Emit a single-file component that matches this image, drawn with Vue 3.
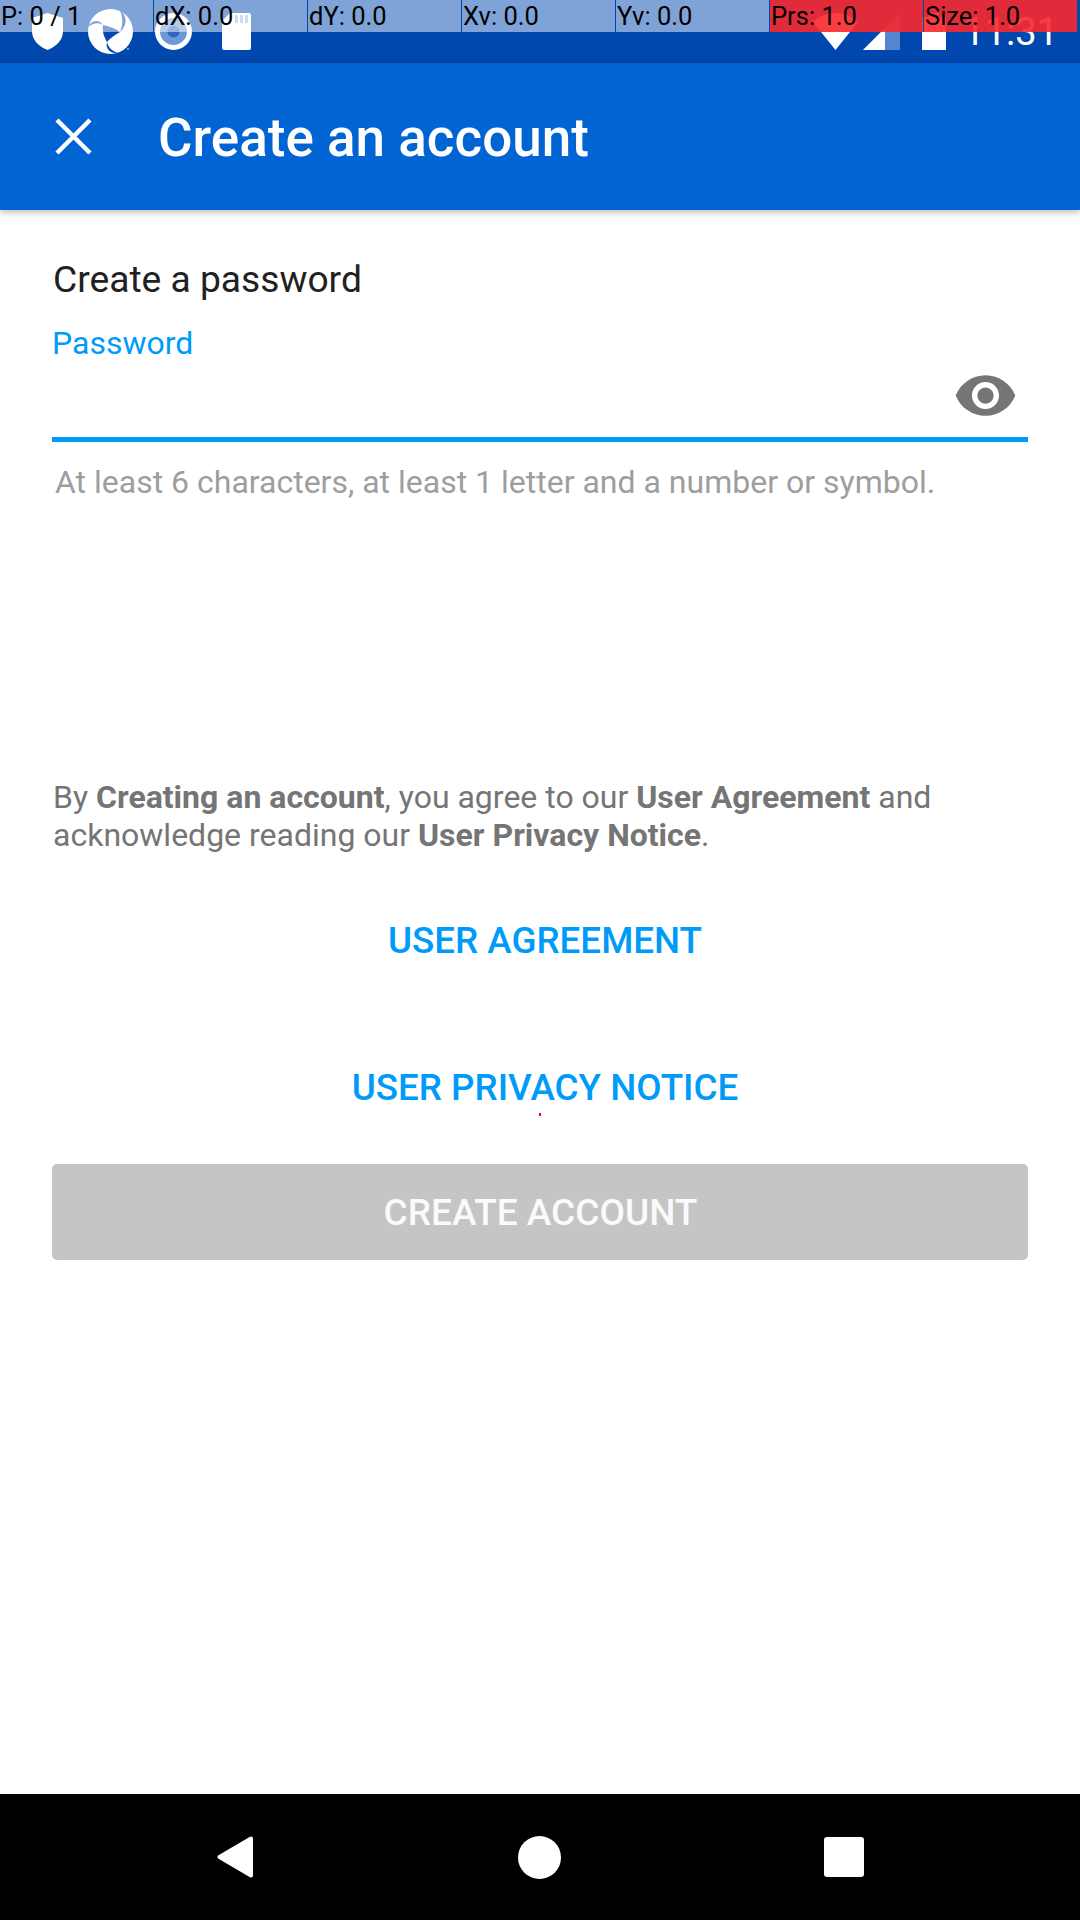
<template>
  <div class="screen">
    <!-- 포인터 위치 오버레이 -->
    <div class="pointer-bar">
      <div
          v-for="cell in pointerCells"
          :key="cell.text"
          class="pointer-cell"
          :class="{ alert: cell.alert }"
      >
        {{ cell.text }}
      </div>
    </div>

    <div class="status-bar">
      <div class="status-left">
        <svg class="ic-shield" viewBox="0 0 31 37">
          <path d="M15.5 0 31 5v13c0 9-6.500 15.500-15.500 19C6.500 33.500 0 27 0 18V5z" fill="#fff" />
        </svg>
        <svg class="ic-logo" viewBox="0 0 45 45">
          <circle cx="22.500" cy="22.500" r="22.500" fill="#fff" />
          <path d="M15 16C20 17 27 19 32 23 27 26 22 29 19 33 16 28 14 22 15 16z" fill="#0047ae" />
          <path d="M32 23C35 16 35 8 32 1.500 39 6 40 16 32 23z" fill="#0047ae" />
          <path d="M15 16C10 13 5 14 .5 18 3 11 11 10 15 16z" fill="#0047ae" />
          <path d="M19 33C20 38 24 42 30 44 23 45 17 40 19 33z" fill="#0047ae" />
          <circle cx="40" cy="40" r=".8" fill="#fff" />
        </svg>
        <svg class="ic-ring" viewBox="0 0 37 37">
          <circle cx="18.500" cy="18.500" r="18.500" fill="#fff" />
          <circle cx="18.500" cy="18.500" r="13.500" fill="#6f98d6" />
          <circle cx="18.500" cy="18.500" r="6" fill="#2e66bd" />
        </svg>
        <svg class="ic-sd" viewBox="0 0 29 37">
          <path d="M8 0h19a2 2 0 0 1 2 2v33a2 2 0 0 1-2 2H2a2 2 0 0 1-2-2V8z" fill="#fff" />
          <path d="M13 2h3v8h-3zM18 2h3v8h-3zM23 2h3v8h-3z" fill="#9fb6dc" />
        </svg>
      </div>
      <div class="status-right">
        <svg class="ic-wifi" viewBox="0 0 45 37">
          <path d="M22.500 37 0 9C13-3 32-3 45 9z" fill="#fff" />
        </svg>
        <svg class="ic-signal" viewBox="0 0 37 37">
          <path d="M0 37 37 0v37z" fill="#5686ce" />
          <path d="M0 37 22 15v22z" fill="#fff" />
        </svg>
        <svg class="ic-battery" viewBox="0 0 24 37">
          <path d="M7 0h10v4h7v33H0V4h7z" fill="#fff" />
        </svg>
        <span class="clock">11:31</span>
      </div>
    </div>

    <header class="app-bar">
      <svg class="ic-close" viewBox="0 0 37 37">
        <path d="M2 2 35 35M35 2 2 35" stroke="#fff" stroke-width="4.500" fill="none" />
      </svg>
      <h1 class="app-title">Create an account</h1>
    </header>

    <main class="content">
      <h2 class="section-title">Create a password</h2>
      <label class="field-label">Password</label>
      <div class="field-row">
        <svg class="ic-eye" viewBox="0 0 24 24">
          <path d="M12 4.500C7 4.500 2.730 7.610 1 12c1.730 4.390 6 7.500 11 7.500s9.270-3.110 11-7.500c-1.730-4.390-6-7.500-11-7.500zM12 17c-2.760 0-5-2.240-5-5s2.240-5 5-5 5 2.240 5 5-2.240 5-5 5zm0-8c-1.660 0-3 1.340-3 3s1.340 3 3 3 3-1.340 3-3-1.340-3-3-3z" fill="#757575" />
        </svg>
      </div>
      <p class="hint">At least 6 characters, at least 1 letter and a number or symbol.</p>

      <p class="terms">
        By <b>Creating an account</b>, you agree to our <b>User Agreement</b> and<br />
        acknowledge reading our <b>User Privacy Notice</b>.
      </p>

      <a class="link link-first">USER AGREEMENT</a>
      <a class="link link-second">USER PRIVACY NOTICE</a>
      <i class="touch-dot"></i>

      <button class="create-btn" disabled>CREATE ACCOUNT</button>
    </main>

    <nav class="nav-bar">
      <svg class="ic-back" viewBox="0 0 37 42">
        <path d="M34 2.500 2.500 21 34 39.500z" fill="#fff" stroke="#fff" stroke-width="4" stroke-linejoin="round" />
      </svg>
      <span class="ic-home"></span>
      <span class="ic-recent"></span>
    </nav>
  </div>
</template>

<script setup>
const pointerCells = [
  { text: "P: 0 / 1" },
  { text: "dX: 0.0" },
  { text: "dY: 0.0" },
  { text: "Xv: 0.0" },
  { text: "Yv: 0.0" },
  { text: "Prs: 1.0", alert: true },
  { text: "Size: 1.0", alert: true },
];
</script>

<style>
html,
body {
  margin: 0;
  background: #fff;
}
</style>

<style scoped>
.screen {
  position: relative;
  display: flex;
  flex-direction: column;
  width: 1080px;
  height: 1920px;
  overflow: hidden;
  background: #fff;
  font-family: Roboto, "Liberation Sans", sans-serif;
}

.pointer-bar {
  position: absolute;
  top: 0;
  left: 0;
  z-index: 5;
  display: grid;
  grid-template-columns: repeat(7, 1fr);
  width: 1078px;
  height: 32px;
}

.pointer-cell {
  box-sizing: border-box;
  padding-left: 1px;
  border-right: 1px solid #0047ae;
  background: rgba(255, 255, 255, 0.5);
  color: #000;
  font-size: 25.500px;
  line-height: 32px;
  white-space: nowrap;
}

.pointer-cell.alert {
  background: rgba(250, 40, 45, 0.9);
}

.status-bar {
  display: flex;
  justify-content: space-between;
  flex: none;
  height: 63px;
  background: #0047ae;
}

.status-left,
.status-right {
  display: flex;
  align-items: flex-start;
  padding-top: 13px;
}

.status-left {
  padding-left: 32px;
}

.status-right {
  padding-right: 22px;
}

.ic-shield {
  width: 31px;
  height: 37px;
}

.ic-logo {
  width: 45px;
  height: 45px;
  margin: -4px 0 0 25px;
}

.ic-ring {
  width: 37px;
  height: 37px;
  margin-left: 22px;
}

.ic-sd {
  width: 29px;
  height: 37px;
  margin-left: 30px;
}

.ic-wifi {
  width: 45px;
  height: 37px;
}

.ic-signal {
  width: 37px;
  height: 37px;
  margin-left: 5px;
}

.ic-battery {
  width: 24px;
  height: 37px;
  margin-left: 22px;
}

.clock {
  margin: -1px 0 0 17px;
  color: #fff;
  font-size: 38px;
  line-height: 40px;
}

.app-bar {
  position: relative;
  z-index: 2;
  display: flex;
  align-items: center;
  flex: none;
  height: 147px;
  padding-left: 55px;
  background: #0065d3;
  box-shadow: 0 2px 7px rgba(0, 0, 0, 0.3);
}

.ic-close {
  width: 37px;
  height: 37px;
}

.app-title {
  margin: 3px 0 0 66px;
  color: #fff;
  font-size: 53px;
  font-weight: 500;
  line-height: 60px;
}

.content {
  position: relative;
  display: flex;
  flex-direction: column;
  flex: 1;
  padding: 0 52px;
}

.section-title {
  margin: 48px 0 0 1px;
  color: #212121;
  font-size: 37.200px;
  font-weight: 400;
  line-height: 42px;
}

.field-label {
  margin-top: 25px;
  color: #009bf8;
  font-size: 32px;
  line-height: 36px;
}

.field-row {
  display: flex;
  justify-content: flex-end;
  align-items: center;
  box-sizing: border-box;
  height: 76px;
  margin-top: 5px;
  border-bottom: 5px solid #009bf8;
}

.ic-eye {
  width: 65px;
  height: 65px;
  margin: -12px 10px 0 0;
}

.hint {
  margin: 22px 0 0 3px;
  color: #9e9e9e;
  font-size: 32px;
  line-height: 36px;
}

.terms {
  margin: 278px 0 0 1px;
  color: #757575;
  font-size: 32px;
  line-height: 38px;
}

.terms b {
  font-weight: 700;
}

.link {
  align-self: center;
  color: #009bf8;
  font-size: 36.750px;
  font-weight: 500;
  line-height: 42px;
  transform: translateX(5px);
}

.link-first {
  margin-top: 66px;
}

.link-second {
  margin-top: 105px;
}

.touch-dot {
  position: absolute;
  top: 903px;
  left: 539px;
  width: 2px;
  height: 3px;
  background: #f00;
}

.create-btn {
  flex: none;
  height: 96px;
  margin-top: 55px;
  padding: 0 0 0 1px;
  border: 0;
  border-radius: 5px;
  background: #c5c5c5;
  color: #fafafa;
  font-family: inherit;
  font-size: 37px;
  font-weight: 500;
}

.nav-bar {
  position: relative;
  flex: none;
  display: flex;
  align-items: center;
  height: 126px;
  background: #000;
}

.ic-back {
  width: 37px;
  height: 42px;
  margin-left: 217px;
}

.ic-home {
  width: 43px;
  height: 43px;
  margin-left: 264px;
  border-radius: 50%;
  background: #fff;
}

.ic-recent {
  width: 40px;
  height: 40px;
  margin-left: 263px;
  border-radius: 3px;
  background: #fff;
}
</style>
